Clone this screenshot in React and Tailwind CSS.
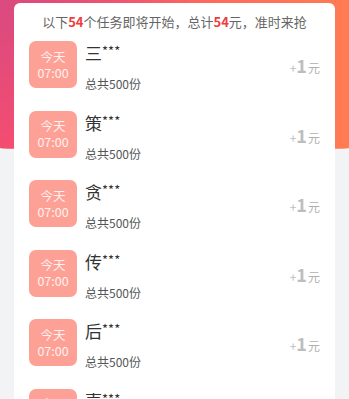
import React from 'react';

const tasks = ['三', '策', '贪', '传', '后', '嘉'];

function TaskRow({ name }) {
  return (
    <div className="flex h-[69.5px] items-start pt-[9px] pl-[15px] pr-[15px]">
      <div className="flex h-[47px] w-[48px] shrink-0 flex-col items-center justify-center rounded-[7px] bg-[#fda196] text-[12.5px] leading-[16px] text-white/85">
        <span>今天</span>
        <span>07:00</span>
      </div>
      <div className="ml-[8px] flex h-[51px] flex-1 flex-col justify-between pt-[1px]">
        <div className="flex items-start text-[17px] leading-[22px] text-[#333]">
          <span>{name}</span>
          <span className="mt-[-1px] text-[13px] leading-[20px]">***</span>
        </div>
        <div className="text-[12px] leading-[16px] text-[#555]">总共500份</div>
      </div>
      <div className="mt-[13px] flex items-baseline leading-[22px] text-[#bdbdbd]">
        <span className="text-[12px]">+</span>
        <span className="text-[18px] font-bold">1</span>
        <span className="ml-[1px] text-[12px] text-[#b0b0b0]">元</span>
      </div>
    </div>
  );
}

export default function App() {
  return (
    <div className="h-[399px] w-[349px] overflow-hidden bg-[#f2f3f5] font-['Noto_Sans_CJK_SC','Noto_Sans',sans-serif]">
      <div className="h-[150px] rounded-b-[50%_2px] bg-[radial-gradient(circle_at_0_0,#d94a80,transparent_55%),linear-gradient(to_right,#ff4d6b,#ff7c52)]" />
      <div className="mx-[14px] -mt-[147px] rounded-t-[6px] bg-white">
        <div className="pt-[9px] text-center text-[13px] leading-[20px] text-[#666]">
          以下<span className="font-bold text-[#f03c3c]">54</span>个任务即将开始，总计
          <span className="font-bold text-[#f03c3c]">54</span>元，准时来抢
        </div>
        {tasks.map((t) => (
          <TaskRow key={t} name={t} />
        ))}
      </div>
    </div>
  );
}
